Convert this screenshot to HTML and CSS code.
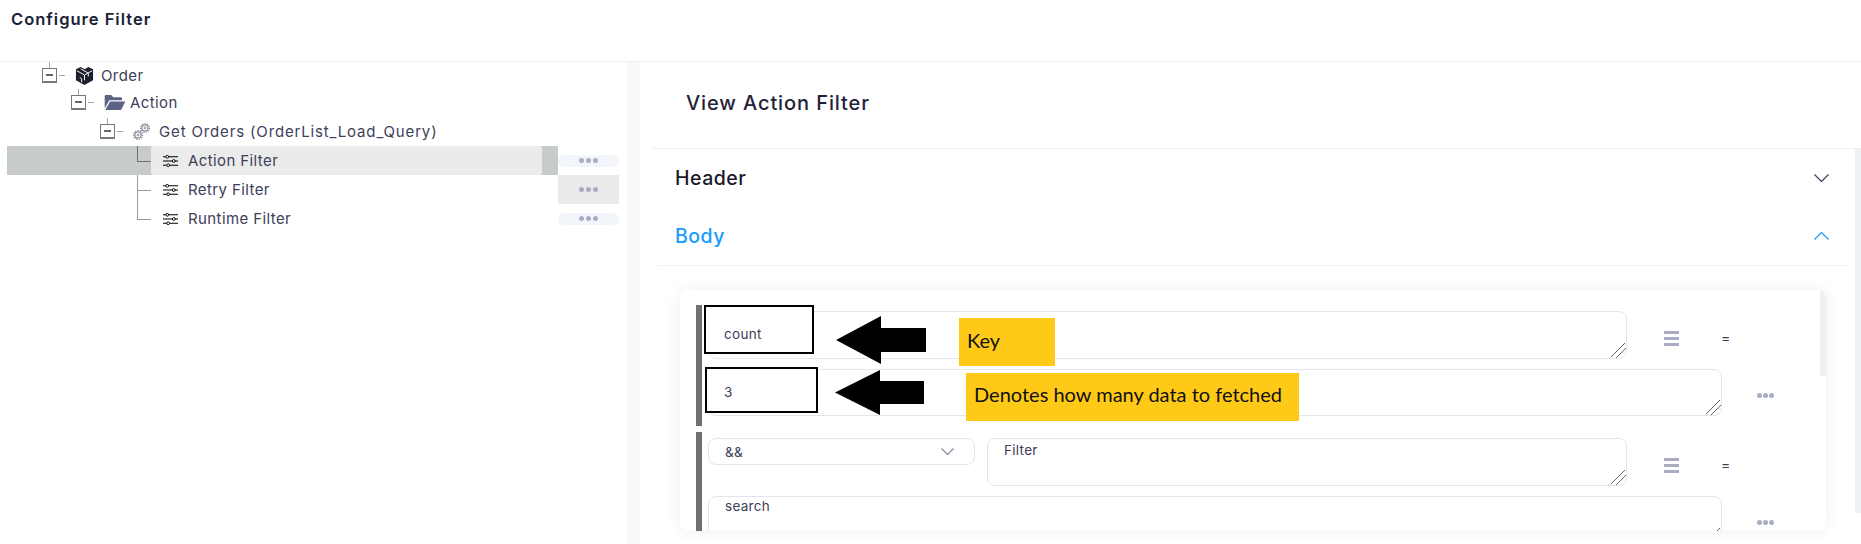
FILE: index.html
```html
<!DOCTYPE html>
<html lang="en">
<head>
    <meta charset="UTF-8">
    <meta name="viewport" content="width=device-width, initial-scale=1.0">
    <title>Configure Filter</title>
    <link rel="stylesheet" href="styles.css">
</head>

<body>
    <header class="topbar">Configure Filter</header>

    <main class="layout">
        <section class="tree">
            <div class="tree-row level-1">
                <span class="toggle"></span><span class="dash"></span>
                <svg class="icon-cube" viewBox="0 0 20 20">
                    <path d="M10 3.500 L6 1 L1 3.500 V15 L10 20 L19 15 V3.500 L14 1 Z" fill="#1d1f2b"/>
                    <path d="M2 5 L10 9.500 L18 5 M10 9.500 V15 M6 3 L14 7.500 V11 M5 12 L7 13.500 V17" fill="none" stroke="#fff" stroke-width="1"/>
                </svg>
                <span class="tree-label">Order</span>
            </div>
            <div class="tree-row level-2">
                <span class="toggle"></span><span class="dash"></span>
                <svg class="icon-folder" viewBox="0 0 22 16">
                    <path d="M0 14 V1.500 Q0 0 1.500 0 H7 L9 2.500 H17 Q18.500 2.500 18.500 4 V5.500 H5 Z" fill="#5f6383"/>
                    <path d="M5.800 6.800 H22 L17.500 16 H0.500 Z" fill="#5f6383"/>
                </svg>
                <span class="tree-label">Action</span>
            </div>
            <div class="tree-row level-3">
                <span class="toggle"></span><span class="dash"></span>
                <svg class="icon-gears" viewBox="0 0 17 17" fill="none" stroke="#77798c">
                    <circle cx="5" cy="12" r="3.200" stroke-width="1"/>
                    <circle cx="5" cy="12" r="4.300" stroke-width="1.200" stroke-dasharray="1.300 1.100"/>
                    <circle cx="5" cy="12" r="1" stroke-width=".8"/>
                    <circle cx="12" cy="5" r="3.200" stroke-width="1"/>
                    <circle cx="12" cy="5" r="4.300" stroke-width="1.200" stroke-dasharray="1.300 1.100"/>
                    <circle cx="12" cy="5" r="1" stroke-width=".8"/>
                </svg>
                <span class="tree-label label-query">Get Orders (OrderList_Load_Query)</span>
            </div>

            <div class="leaf-row">
                <div class="leaf leaf-selected">
                    <span class="leaf-line line-last"></span>
                    <div class="leaf-body">
                        <svg class="icon-sliders" viewBox="0 0 16 14"><use href="#sliders"/></svg>
                        <span class="tree-label">Action Filter</span>
                    </div>
                </div>
                <div class="more-cell"><span class="more-pill"><span class="dots"><i></i><i></i><i></i></span></span></div>
            </div>
            <div class="leaf-row">
                <div class="leaf">
                    <span class="leaf-line line-middle"></span>
                    <div class="leaf-body">
                        <svg class="icon-sliders" viewBox="0 0 16 14"><use href="#sliders"/></svg>
                        <span class="tree-label">Retry Filter</span>
                    </div>
                </div>
                <div class="more-cell more-hover"><span class="more-pill"><span class="dots"><i></i><i></i><i></i></span></span></div>
            </div>
            <div class="leaf-row">
                <div class="leaf">
                    <span class="leaf-line line-last"></span>
                    <div class="leaf-body">
                        <svg class="icon-sliders" viewBox="0 0 16 14"><use href="#sliders"/></svg>
                        <span class="tree-label">Runtime Filter</span>
                    </div>
                </div>
                <div class="more-cell"><span class="more-pill"><span class="dots"><i></i><i></i><i></i></span></span></div>
            </div>
        </section>

        <div class="gutter"></div>

        <section class="detail">
            <h2 class="detail-title">View Action Filter</h2>
            <div class="detail-scroll">
                <div class="accordion">
                    <div class="acc-head">
                        <span>Header</span>
                        <svg class="chevron" viewBox="0 0 15 8"><path d="M0.500 0.500 L7.500 7.500 L14.500 0.500"/></svg>
                    </div>
                    <div class="acc-head acc-open">
                        <span>Body</span>
                        <svg class="chevron" viewBox="0 0 15 8"><path d="M0.500 7.500 L7.500 0.500 L14.500 7.500"/></svg>
                    </div>

                    <div class="card">
                        <div class="group">
                            <div class="field-row">
                                <textarea class="field field-short"></textarea>
                                <span class="menu-icon"><i></i><i></i><i></i></span>
                                <span class="equals">=</span>
                            </div>
                            <div class="field-row">
                                <textarea class="field field-long"></textarea>
                                <span class="dots dots-big"><i></i><i></i><i></i></span>
                            </div>
                        </div>
                        <div class="group">
                            <div class="field-row">
                                <div class="select-box">
                                    <span>&amp;&amp;</span>
                                    <svg class="select-arrow" viewBox="0 0 13 7"><path d="M0.500 0.500 L6.500 6.500 L12.500 0.500"/></svg>
                                </div>
                                <textarea class="field field-filter">Filter</textarea>
                                <span class="menu-icon"><i></i><i></i><i></i></span>
                                <span class="equals">=</span>
                            </div>
                            <div class="field-row">
                                <textarea class="field field-long field-search">search</textarea>
                                <span class="dots dots-big"><i></i><i></i><i></i></span>
                            </div>
                        </div>

                        <!-- annotations pasted over the form -->
                        <div class="note-box box-count">count</div>
                        <div class="note-box box-value">3</div>
                        <svg class="arrow arrow-count" viewBox="0 0 90 48"><path d="M0 24 L45 0 V12 H90 V36 H45 V48 Z"/></svg>
                        <svg class="arrow arrow-value" viewBox="0 0 89 45"><path d="M0 22.500 L45 0 V11 H89 V34 H45 V45 Z"/></svg>
                        <div class="note note-key">Key</div>
                        <div class="note note-value">Denotes how many data to fetched</div>
                        <div class="card-thumb"></div>
                    </div>
                </div>
                <div class="scroll-track"></div>
            </div>
        </section>
    </main>

    <svg class="svg-defs" width="0" height="0">
        <symbol id="sliders" viewBox="0 0 16 14">
            <path d="M0 2.500 H16 M0 7 H16 M0 11.500 H16" stroke="#000" stroke-width="1.200"/>
            <circle cx="4.500" cy="2.500" r="1.500" fill="#fff" stroke="#000"/>
            <circle cx="11.500" cy="7" r="1.500" fill="#fff" stroke="#000"/>
            <circle cx="5.500" cy="11.500" r="1.500" fill="#fff" stroke="#000"/>
        </symbol>
    </svg>
</body>
</html>
```

FILE: styles.css
```css
* {
    box-sizing: border-box;
}

html, body {
    height: 100%;
}

body {
    margin: 0;
    height: 544px;
    overflow: hidden;
    background-color: #fff;
    color: #3d4059;
    font-family: Inter, "Open Sans", sans-serif;
}

.topbar {
    height: 62px;
    padding: 9px 11px 0;
    border-bottom: 1px solid #eef0f4;
    color: #1a1f36;
    font-size: 16.5px;
    font-weight: 600;
    letter-spacing: 1px;
    line-height: 20px;
}

.layout {
    display: flex;
    height: 482px;
}

/* left tree */
.tree {
    width: 627px;
    flex-shrink: 0;
    font-size: 15px;
    letter-spacing: 0.4px;
}

.gutter {
    width: 13px;
    flex-shrink: 0;
    background-color: #f8f9fb;
}

.tree-row {
    display: flex;
    align-items: center;
    height: 29px;
}

.level-1 {
    height: 26px;
    padding-left: 42px;
}

.level-2 {
    padding-left: 71px;
}

.level-3 {
    padding-left: 100px;
}

.toggle {
    position: relative;
    width: 15px;
    height: 15px;
    flex-shrink: 0;
    border: 1px solid #77777c;
    border-bottom-width: 2px;
}

.toggle::before {
    content: "";
    position: absolute;
    left: 6px;
    top: -7px;
    width: 1px;
    height: 6px;
    background-color: #a9a9ad;
}

.toggle::after {
    content: "";
    position: absolute;
    left: 3px;
    top: 5px;
    width: 7px;
    height: 2px;
    background-color: #66666c;
}

.dash {
    width: 6px;
    height: 1px;
    margin-left: 2px;
    flex-shrink: 0;
    background-color: #a9a9ad;
}

.tree-label {
    white-space: nowrap;
    color: #3d4059;
}

.label-query {
    letter-spacing: 0.85px;
}

.icon-cube {
    width: 19px;
    height: 19px;
    margin: 0 7px 0 10px;
}

.icon-folder {
    width: 22px;
    height: 15px;
    margin: 0 4px 0 10px;
}

.icon-gears {
    width: 17px;
    height: 17px;
    margin: 0 9px 0 10px;
}

.icon-sliders {
    width: 15px;
    height: 14px;
    margin-right: 10px;
    flex-shrink: 0;
}

.svg-defs {
    display: block;
    overflow: hidden;
}

.leaf-row {
    display: flex;
    height: 29px;
}

.leaf {
    display: flex;
    width: 551px;
    margin-left: 7px;
    padding: 0 16px 0 130px;
}

.leaf-selected {
    background-color: #c8cbcb;
}

.leaf-line {
    position: relative;
    width: 14px;
    flex-shrink: 0;
    border-left: 1px solid #9a9a9e;
}

.line-last {
    height: 16px;
    border-bottom: 1px solid #9a9a9e;
}

.leaf-selected .line-last {
    border-color: #707074;
}

.line-middle::after {
    content: "";
    position: absolute;
    left: 0;
    top: 15px;
    width: 13px;
    height: 1px;
    background-color: #9a9a9e;
}

.leaf-body {
    display: flex;
    align-items: center;
    flex: 1;
    padding-left: 12px;
    border-radius: 2px;
}

.leaf-selected .leaf-body {
    background-color: #ebebeb;
}

.more-cell {
    display: flex;
    align-items: center;
    width: 61px;
}

.more-hover {
    background-color: #ebebeb;
}

.more-pill {
    display: flex;
    align-items: center;
    justify-content: center;
    width: 100%;
    height: 12px;
    border-radius: 6px;
    background-color: #f2f5fa;
}

.more-hover .more-pill {
    background-color: transparent;
}

.dots {
    display: flex;
    gap: 2px;
}

.dots i {
    width: 5px;
    height: 5px;
    border-radius: 50%;
    background-color: #a9acc2;
}

/* right side */
.detail {
    flex: 1;
    min-width: 0;
}

.detail-title {
    height: 86px;
    margin: 0;
    padding: 30px 0 0 46px;
    color: #1f2338;
    font-size: 20px;
    font-weight: 500;
    letter-spacing: 0.9px;
    line-height: 22px;
}

.detail-scroll {
    display: flex;
    height: 396px;
    margin-left: 11px;
    border-top: 1px solid #eef0f4;
}

.accordion {
    flex: 1;
    min-width: 0;
    padding: 0 6px;
}

.scroll-track {
    width: 6px;
    height: 364px;
    flex-shrink: 0;
    background-color: #eff2f5;
}

.acc-head {
    display: flex;
    align-items: center;
    justify-content: space-between;
    height: 58px;
    padding: 0 20px 0 18px;
    color: #1a1a2c;
    font-size: 19.5px;
    font-weight: 500;
    letter-spacing: 0.5px;
}

.acc-open {
    height: 59px;
    border-bottom: 1px solid #eef0f4;
    color: #1a9bfc;
}

.chevron {
    width: 15px;
    height: 8px;
    fill: none;
    stroke: #3d4059;
    stroke-width: 1.200;
}

.acc-open .chevron {
    stroke: #1a9bfc;
}

.card {
    position: relative;
    height: 241px;
    margin: 24px 23px 0;
    padding: 15px 0 0 16px;
    overflow: hidden;
    border-radius: 8px;
    background-color: #fff;
    box-shadow: 0 0 16px rgba(40, 50, 70, 0.08);
}

.group {
    padding: 6px 0 0 6px;
    border-left: 6px solid #72706c;
}

.group + .group {
    margin-top: 6px;
}

.group:first-child {
    height: 121px;
}

.field-row {
    display: flex;
    align-items: flex-start;
    margin-bottom: 10px;
}

.field {
    display: block;
    height: 48px;
    padding: 2px 16px 0;
    border: 1px solid #e4e4ef;
    border-radius: 8px;
    outline: none;
    color: #3d4059;
    background-color: #fff;
    font-family: inherit;
    font-size: 13.5px;
    letter-spacing: 0.3px;
    line-height: 18px;
}

/* the browser's grip, drawn a bit heavier as in the app */
.field::-webkit-resizer {
    background: linear-gradient(135deg,
        transparent 9.200px, #666 9.200px, #666 10.400px,
        transparent 10.400px, transparent 13.600px,
        #666 13.600px, #666 14.800px, transparent 14.800px);
}

.field-short {
    width: 919px;
}

.field-long {
    width: 1014px;
    height: 47px;
}

.field-filter {
    width: 640px;
    margin-left: 12px;
}

.field-search {
    height: 48px;
    padding-top: 0;
}

.select-box {
    display: flex;
    align-items: center;
    justify-content: space-between;
    width: 267px;
    height: 27px;
    padding: 0 20px 0 16px;
    border: 1px solid #e4e4ef;
    border-radius: 8px;
    font-size: 13.5px;
    letter-spacing: 0.3px;
}

.select-arrow {
    width: 13px;
    height: 7px;
    fill: none;
    stroke: #8b8da3;
    stroke-width: 1.300;
}

.menu-icon {
    display: flex;
    flex-direction: column;
    gap: 3px;
    width: 15px;
    margin: 20px 0 0 37px;
}

.menu-icon i {
    height: 3px;
    background-color: #a9acc2;
}

.equals {
    margin: 18px 0 0 42px;
    color: #3d4059;
    font-size: 14px;
    line-height: 18px;
}

.dots-big {
    margin: 24px 0 0 35px;
    gap: 1px;
}

.dots-big i {
    width: 5px;
    height: 5px;
}

/* annotations */
.note-box {
    position: absolute;
    padding-left: 17px;
    border: 2px solid #000;
    background-color: #fff;
    font-size: 13.5px;
    letter-spacing: 0.3px;
}

.box-count {
    left: 24px;
    top: 15px;
    width: 110px;
    height: 49px;
    padding-left: 18px;
    line-height: 55px;
}

.box-value {
    left: 25px;
    top: 77px;
    width: 113px;
    height: 46px;
    line-height: 47px;
}

.arrow {
    position: absolute;
    fill: #000;
}

.arrow-count {
    left: 156px;
    top: 26px;
    width: 90px;
    height: 48px;
}

.arrow-value {
    left: 155px;
    top: 80px;
    width: 89px;
    height: 45px;
}

.note {
    position: absolute;
    padding-left: 8px;
    background-color: #ffc917;
    color: #111;
    font-family: Lato, sans-serif;
    font-size: 20px;
    line-height: 45px;
}

.note-key {
    left: 279px;
    top: 28px;
    width: 96px;
    height: 48px;
}

.note-value {
    left: 286px;
    top: 83px;
    width: 333px;
    height: 48px;
    line-height: 43px;
}

.card-thumb {
    position: absolute;
    right: 0;
    top: 0;
    width: 6px;
    height: 86px;
    background-color: #eef1f4;
}
```
